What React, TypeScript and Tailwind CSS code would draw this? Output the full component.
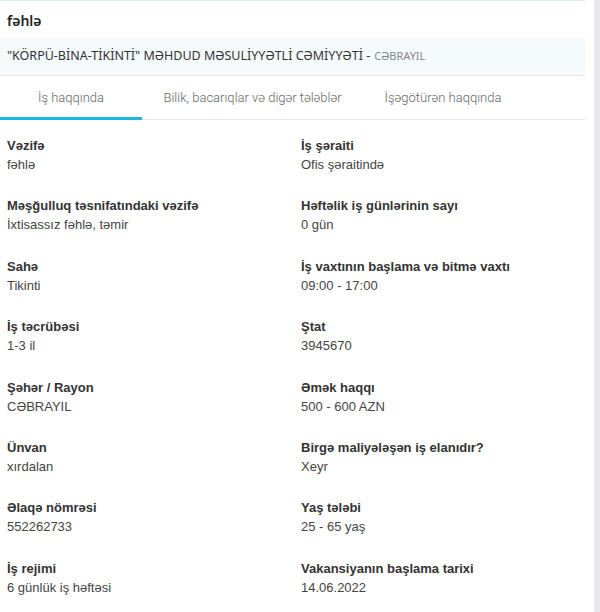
import React from "react";

const left = [
  ["Vəzifə", "fəhlə"],
  ["Məşğulluq təsnifatındaki vəzifə", "İxtisassız fəhlə, təmir"],
  ["Sahə", "Tikinti"],
  ["İş təcrübəsi", "1-3 il"],
  ["Şəhər / Rayon", "CƏBRAYIL"],
  ["Ünvan", "xırdalan"],
  ["Əlaqə nömrəsi", "552262733"],
  ["İş rejimi", "6 günlük iş həftəsi"],
];

const right = [
  ["İş şəraiti", "Ofis şəraitində"],
  ["Həftəlik iş günlərinin sayı", "0 gün"],
  ["İş vaxtının başlama və bitmə vaxtı", "09:00 - 17:00"],
  ["Ştat", "3945670"],
  ["Əmək haqqı", "500 - 600 AZN"],
  ["Birgə maliyələşən iş elanıdır?", "Xeyr"],
  ["Yaş tələbi", "25 - 65 yaş"],
  ["Vakansiyanın başlama tarixi", "14.06.2022"],
];

const Field = ({ label, value }: { label: string; value: string }) => (
  <div className="h-[60.4px]">
    <div className="text-[13px] font-bold leading-[18px] text-[#333]">{label}</div>
    <div className="text-[13px] leading-[19px] text-[#444]">{value}</div>
  </div>
);

export default function App() {
  return (
    <div className="flex h-[612px] w-[600px] overflow-hidden bg-white font-['Liberation_Sans',Arial,sans-serif]">
      <div className="w-[585px]">
        <div className="h-[2px] border-t border-[#d6e9f1]" />
        <div className="flex h-[36px] items-center px-[7px] font-['Noto_Sans',sans-serif] text-[14px] font-semibold text-[#222]">
          fəhlə
        </div>
        <div className="flex h-[37px] items-center bg-[#f5fafd] px-[7px] font-['Noto_Sans',sans-serif] text-[12.5px] text-[#333]">
          "KÖRPÜ-BİNA-TİKİNTİ" MƏHDUD MƏSULİYYƏTLİ CƏMİYYƏTİ -
          <span className="ml-[4px] text-[11px] text-[#888]">CƏBRAYIL</span>
        </div>
        <div className="flex h-[45px] border-y border-[#e4e8ea] font-['Roboto',sans-serif] text-[13px] font-light text-[#666]">
          <div className="relative flex w-[142px] items-center justify-center whitespace-nowrap">
            İş haqqında
            <div className="absolute bottom-[-1px] left-0 h-[3px] w-full bg-[#1cb7e1]" />
          </div>
          <div className="flex w-[221px] items-center justify-center whitespace-nowrap">
            Bilik, bacarıqlar və digər tələblər
          </div>
          <div className="flex w-[160px] items-center justify-center whitespace-nowrap">
            İşəgötürən haqqında
          </div>
        </div>
        <div className="grid grid-cols-[301px_1fr] pt-[17px]">
          <div className="pl-[7px]">
            {left.map(([l, v]) => (
              <Field key={l} label={l} value={v} />
            ))}
          </div>
          <div>
            {right.map(([l, v]) => (
              <Field key={l} label={l} value={v} />
            ))}
          </div>
        </div>
      </div>
      <div className="w-[9px]" />
      <div className="w-[6px] bg-[#e8e8ec]" />
    </div>
  );
}
